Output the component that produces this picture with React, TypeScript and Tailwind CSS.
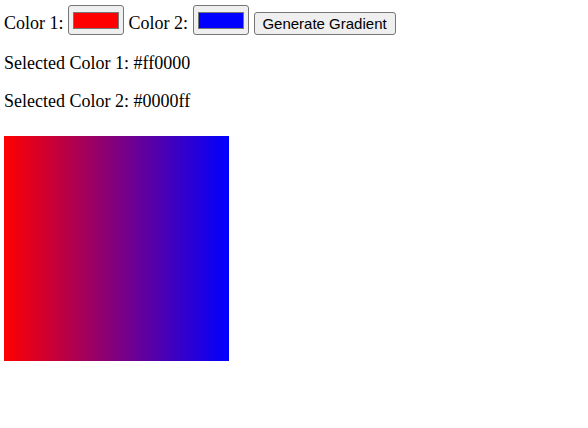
import React, { useState } from 'react';

const Swatch: React.FC<{ color: string }> = ({ color }) => (
  <div className="mt-[5px] flex h-[30px] w-[56px] items-center justify-center rounded-[3px] border border-[#767676] bg-[#efefef]">
    <div className="h-[17px] w-[46px] border border-[#777777]" style={{ backgroundColor: color }} />
  </div>
);

const App: React.FC = () => {
  const [color1] = useState('#ff0000');
  const [color2] = useState('#0000ff');

  return (
    <div className="min-h-screen bg-white px-[4px] font-['Liberation_Serif',_serif] text-[18px] leading-[20px] text-black">
      {/* Pickers */}
      <div className="flex items-start gap-[4.5px]">
        <span className="mt-[13px] whitespace-nowrap">Color 1:</span>
        <Swatch color={color1} />
        <span className="mt-[13px] whitespace-nowrap">Color 2:</span>
        <Swatch color={color2} />
        <button className="ml-[0.5px] mt-[12px] flex h-[23px] w-[142px] items-center justify-center rounded-[3px] border border-[#767676] bg-[#efefef] font-['Liberation_Sans',_sans-serif] text-[15px] leading-none text-black">
          Generate Gradient
        </button>
      </div>

      <p className="mt-[18px]">Selected Color 1: {color1}</p>
      <p className="mt-[18px]">Selected Color 2: {color2}</p>

      <div className="mt-[25px] h-[225px] w-[225px] bg-[linear-gradient(to_right,#ff0000,#0000ff)]" />
    </div>
  );
};

export default App;
